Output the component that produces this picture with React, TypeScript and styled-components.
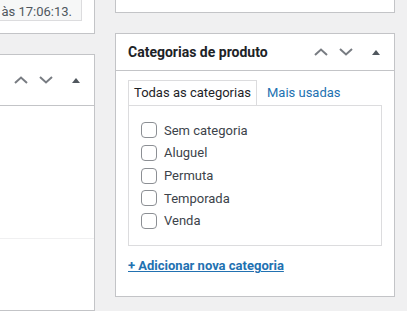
import React from 'react'
import styled, { createGlobalStyle } from 'styled-components'

const GlobalStyle = createGlobalStyle`
  html, body {
    margin: 0;
    padding: 0;
    background: #f0f0f1;
    font-family: Roboto, 'Liberation Sans', sans-serif;
    font-size: 13px;
    color: #3c434a;
    overflow: hidden;
  }
`

const Page = styled.div`
  display: grid;
  grid-template-columns: 1fr 280px;
  column-gap: 20px;
  padding-right: 12px;
  height: 311px;
  overflow: hidden;
`

const Column = styled.div`
  display: flex;
  flex-direction: column;
  gap: 20px;
  min-width: 0;
  overflow: hidden;
`

//Postbox, cut at the page edge on the left side
const Box = styled.div<{ $cutLeft?: boolean; $grow?: boolean }>`
  background: #fff;
  border: 1px solid #c3c4c7;
  border-left: ${(p) => (p.$cutLeft ? 'none' : '1px solid #c3c4c7')};
  flex: ${(p) => (p.$grow ? '1 0 auto' : '0 0 auto')};
  box-sizing: border-box;
`

const TopStub = styled.div<{ $height: number; $cutLeft?: boolean }>`
  height: ${(p) => p.$height}px;
  flex: 0 0 auto;
  box-sizing: border-box;
  background: #fff;
  border: 1px solid #c3c4c7;
  border-top: none;
  border-left: ${(p) => (p.$cutLeft ? 'none' : '1px solid #c3c4c7')};
  padding: 0 12px 12px 0;
  display: flex;
  align-items: flex-end;
`

const SavedField = styled.div`
  flex: 1;
  height: 21px;
  box-sizing: border-box;
  background: #f6f7f7;
  border: 1px solid #dcdcde;
  border-top: none;
  border-left: none;
  padding-top: 2px;
  padding-right: 9px;
  display: flex;
  align-items: center;
  justify-content: flex-end;
  overflow: hidden;
  white-space: nowrap;
  color: #50575e;
`

const Header = styled.div<{ $height: number }>`
  height: ${(p) => p.$height}px;
  display: flex;
  align-items: center;
  border-bottom: 1px solid #c3c4c7;
`

const Title = styled.h2`
  flex: 1;
  margin: 0;
  padding-left: 12px;
  font-size: 14px;
  font-weight: 700;
  color: #1d2327;
  white-space: nowrap;
`

const Actions = styled.div`
  display: flex;
  align-items: center;
  margin-left: auto;
  height: 100%;
`

const IconButton = styled.span<{ $width: number }>`
  width: ${(p) => p.$width}px;
  height: 100%;
  display: flex;
  align-items: center;
  justify-content: center;
`

const Divider = styled.div`
  height: 132px;
  border-bottom: 1px solid #f0f0f1;
`

const Body = styled.div`
  padding: 9px 12px 21px;
`

const Tabs = styled.div`
  display: flex;
  align-items: flex-end;
`

const Tab = styled.span<{ $active?: boolean }>`
  padding: 3px 5px;
  line-height: 18px;
  border: 1px solid ${(p) => (p.$active ? '#dcdcde' : 'transparent')};
  border-bottom: none;
  margin-left: ${(p) => (p.$active ? '0' : '4px')};
  color: ${(p) => (p.$active ? '#1d2327' : '#2271b1')};
`

const Panel = styled.ul`
  list-style: none;
  margin: 0;
  padding: 13px 12px;
  border: 1px solid #dcdcde;
`

const Row = styled.li`
  height: 22.67px;
  display: flex;
  align-items: center;
  gap: 7px;
  color: #3c434a;
`

const CheckBox = styled.span`
  width: 16px;
  height: 16px;
  box-sizing: border-box;
  border: 1px solid #8c8f94;
  border-radius: 4px;
  background: #fff;
`

const AddLink = styled.a`
  display: inline-block;
  margin-top: 11px;
  line-height: 18px;
  font-weight: 700;
  color: #2271b1;
  text-decoration: underline;
`

const Chevron = ({ up }: { up?: boolean }) => (
  <svg width='14' height='8' viewBox='0 0 14 8'>
    <path
      d={up ? 'M1 7L7 1.5L13 7' : 'M1 1L7 6.5L13 1'}
      fill='none'
      stroke='#787c82'
      strokeWidth='2'
    />
  </svg>
)

const Caret = () => (
  <svg width='8' height='5' viewBox='0 0 8 5'>
    <path d='M0 5L4 0L8 5Z' fill='#50575e' />
  </svg>
)

const HandleActions = () => (
  <Actions>
    <IconButton $width={25}>
      <Chevron up />
    </IconButton>
    <IconButton $width={25}>
      <Chevron />
    </IconButton>
    <IconButton $width={36}>
      <Caret />
    </IconButton>
  </Actions>
)

const categories = ['Sem categoria', 'Aluguel', 'Permuta', 'Temporada', 'Venda']

const App = () => {
  return (
    <>
      <GlobalStyle />
      <Page>
        <Column>
          <TopStub $height={34} $cutLeft>
            <SavedField>Rascunho salvo às 17:06:13.</SavedField>
          </TopStub>
          <Box $cutLeft $grow>
            <Header $height={50}>
              <HandleActions />
            </Header>
            <Divider />
          </Box>
        </Column>
        <Column>
          <TopStub $height={13} />
          <Box>
            <Header $height={36}>
              <Title>Categorias de produto</Title>
              <HandleActions />
            </Header>
            <Body>
              <Tabs>
                <Tab $active>Todas as categorias</Tab>
                <Tab>Mais usadas</Tab>
              </Tabs>
              <Panel>
                {categories.map((name) => (
                  <Row key={name}>
                    <CheckBox />
                    {name}
                  </Row>
                ))}
              </Panel>
              <AddLink href='#'>+ Adicionar nova categoria</AddLink>
            </Body>
          </Box>
        </Column>
      </Page>
    </>
  )
}

export default App
